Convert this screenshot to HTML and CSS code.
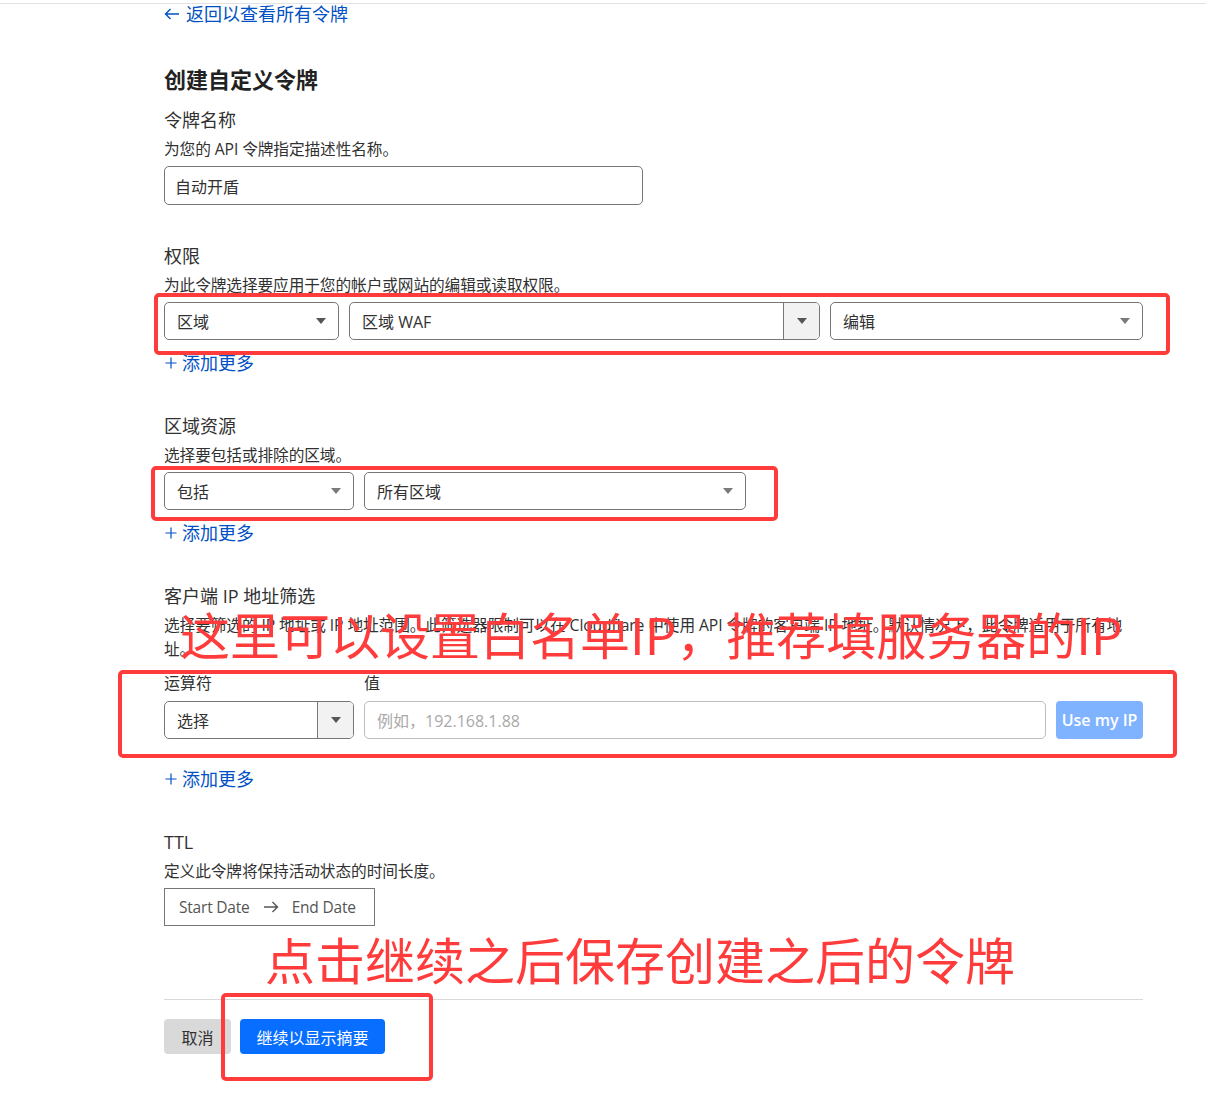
FILE: index.html
```html
<!DOCTYPE html>
<html lang="zh-CN">
<head>
<meta charset="utf-8">
<title>创建自定义令牌</title>
<link rel="stylesheet" href="styles.css">
</head>
<body>
<div class="page">
  <div class="topbar"></div>
  <main class="content">
    <a class="back" href="#">
      <svg class="back-arrow" width="16" height="12" viewBox="0 0 16 12"><path d="M15 6H1.5M6.5 1L1.5 6l5 5" fill="none" stroke="#0051c3" stroke-width="1.4"/></svg>
      <span>返回以查看所有令牌</span>
    </a>
    <h1 class="title">创建自定义令牌</h1>

    <section class="field field-first">
      <div class="label">令牌名称</div>
      <div class="desc">为您的 API 令牌指定描述性名称。</div>
      <div class="control name-input">自动开盾</div>
    </section>

    <section class="field">
      <div class="label">权限</div>
      <div class="desc">为此令牌选择要应用于您的帐户或网站的编辑或读取权限。</div>
      <div class="row perm-row">
        <div class="control select"><span>区域</span><i class="caret"></i></div>
        <div class="control select addon-select"><span class="val">区域 WAF</span><span class="addon"><i class="caret"></i></span></div>
        <div class="control select"><span>编辑</span><i class="caret caret-light"></i></div>
      </div>
      <a class="add-more" href="#"><svg class="plus" width="12" height="12" viewBox="0 0 12 12"><path d="M6 0.5v11M0.5 6h11" stroke="#0051c3" stroke-width="1.2" fill="none"/></svg>添加更多</a>
    </section>

    <section class="field">
      <div class="label">区域资源</div>
      <div class="desc">选择要包括或排除的区域。</div>
      <div class="row zone-row">
        <div class="control select"><span>包括</span><i class="caret caret-light"></i></div>
        <div class="control select"><span>所有区域</span><i class="caret caret-light"></i></div>
      </div>
      <a class="add-more" href="#"><svg class="plus" width="12" height="12" viewBox="0 0 12 12"><path d="M6 0.5v11M0.5 6h11" stroke="#0051c3" stroke-width="1.2" fill="none"/></svg>添加更多</a>
    </section>

    <section class="field">
      <div class="label">客户端 IP 地址筛选</div>
      <div class="desc desc-wrap">选择要筛选的 IP 地址或 IP 地址范围。此筛选器限制可以在 Cloudflare 中使用 API 令牌的客户端 IP 地址。默认情况下，此令牌适用于所有地址。</div>
      <div class="sub-labels">
        <span class="sub-op">运算符</span>
        <span>值</span>
      </div>
      <div class="row ip-row">
        <div class="control select addon-select"><span class="val">选择</span><span class="addon"><i class="caret"></i></span></div>
        <div class="control text-input"><span class="placeholder">例如，192.168.1.88</span></div>
        <button class="btn-ip" type="button">Use my IP</button>
      </div>
      <a class="add-more add-more-ip" href="#"><svg class="plus" width="12" height="12" viewBox="0 0 12 12"><path d="M6 0.5v11M0.5 6h11" stroke="#0051c3" stroke-width="1.2" fill="none"/></svg>添加更多</a>
    </section>

    <section class="field">
      <div class="label">TTL</div>
      <div class="desc">定义此令牌将保持活动状态的时间长度。</div>
      <div class="date-box">
        <span>Start Date</span>
        <svg class="date-arrow" width="16" height="12" viewBox="0 0 16 12"><path d="M1 6h13.5M9.5 1l5 5-5 5" fill="none" stroke="#555" stroke-width="1.4"/></svg>
        <span>End Date</span>
      </div>
    </section>

    <div class="divider"></div>
    <div class="actions">
      <button class="btn btn-cancel" type="button">取消</button>
      <button class="btn btn-primary" type="button">继续以显示摘要</button>
    </div>
  </main>

  <div class="anno-box box-perm"></div>
  <div class="anno-box box-zone"></div>
  <div class="anno-box box-ip"></div>
  <div class="anno-box box-btn"></div>
  <div class="anno-text text-ip">这里可以设置白名单IP，推荐填服务器的IP</div>
  <div class="anno-text text-btn">点击继续之后保存创建之后的令牌</div>
</div>
</body>
</html>
```

FILE: styles.css
```css
* { box-sizing: border-box; }
body {
  margin: 0;
  background: #fff;
  font-family: "Open Sans", "Noto Sans CJK SC", sans-serif;
  color: #313131;
}
.page {
  position: relative;
  width: 1206px;
  height: 1100px;
  overflow: hidden;
}
.topbar {
  height: 4px;
  border-bottom: 1px solid #e2e2e2;
}
.content {
  padding-left: 164px;
  width: 1143px;
}
.back {
  display: flex;
  align-items: center;
  gap: 6px;
  height: 20px;
  color: #0051c3;
  font-size: 18px;
  line-height: 20px;
  text-decoration: none;
}
.back-arrow { flex: none; }
.title {
  margin: 40px 0 0;
  font-size: 22px;
  line-height: 30px;
  font-weight: 700;
  color: #222;
}
.field { margin-top: 39px; }
.field-first { margin-top: 14px; }
.label {
  font-size: 18px;
  line-height: 24px;
  margin-bottom: 5px;
}
.desc {
  font-size: 15.7px;
  line-height: 24px;
  margin-bottom: 5px;
  letter-spacing: -0.1px;
}
.desc-wrap { max-width: 975px; }
.control {
  height: 38px;
  border: 1px solid #767676;
  border-radius: 5px;
  display: flex;
  align-items: center;
  padding: 0 12px;
  font-size: 16px;
  color: #313131;
  background: #fff;
}
.name-input {
  width: 479px;
  height: 39px;
  padding-left: 10px;
}
.row { display: flex; gap: 10px; }
.perm-row .select:nth-child(1) { width: 175px; }
.perm-row .select:nth-child(2) { width: 471px; }
.perm-row .select:nth-child(3) { flex: 1; }
.zone-row .select:nth-child(1) { width: 190px; }
.zone-row .select:nth-child(2) { width: 382px; }
.select { justify-content: space-between; }
.caret {
  width: 0;
  height: 0;
  border-left: 5px solid transparent;
  border-right: 5px solid transparent;
  border-top: 6px solid #555;
}
.caret-light { border-top-color: #7a7a7a; }
.addon-select { padding-right: 0; overflow: hidden; }
.addon-select .val { flex: 1; }
.addon {
  width: 36px;
  height: 100%;
  border-left: 1px solid #767676;
  background: #f2f2f2;
  display: flex;
  align-items: center;
  justify-content: center;
}
.add-more {
  display: flex;
  align-items: center;
  margin-top: 11px;
  color: #0051c3;
  font-size: 18px;
  line-height: 24px;
  height: 24px;
  text-decoration: none;
}
.add-more-ip { margin-top: 28px; }
.plus {
  flex: none;
  margin: 0 5px 0 1px;
}
.sub-labels {
  display: flex;
  margin-top: 11px;
  margin-bottom: 7px;
  font-size: 16px;
  line-height: 22px;
}
.sub-op { width: 200px; }
.ip-row .select { width: 190px; }
.text-input {
  flex: 1;
  border-color: #bdbdbd;
}
.placeholder { color: #a9a9a9; }
.btn-ip {
  width: 87px;
  height: 38px;
  border: 0;
  border-radius: 4px;
  background: #80b3ff;
  color: #fff;
  font-family: "Open Sans", "Noto Sans CJK SC", sans-serif;
  font-size: 16px;
  font-weight: 600;
  padding: 0;
  white-space: nowrap;
}
.date-box {
  width: 211px;
  height: 38px;
  border: 1px solid #767676;
  display: flex;
  align-items: center;
  gap: 13px;
  padding: 0 14px;
  font-size: 15.5px;
  color: #555;
  white-space: nowrap;
  letter-spacing: -0.2px;
}
.date-arrow { flex: none; }
.divider {
  margin-top: 73px;
  border-top: 1px solid #d9d9d9;
}
.actions {
  display: flex;
  gap: 9px;
  margin-top: 19px;
}
.btn {
  height: 35px;
  border: 0;
  border-radius: 4px;
  font-family: "Open Sans", "Noto Sans CJK SC", sans-serif;
  font-size: 16px;
  padding: 0;
}
.btn-cancel {
  width: 67px;
  background: #d9d9d9;
  color: #313131;
}
.btn-primary {
  width: 145px;
  background: #086eff;
  color: #fff;
}

/* annotation overlays */
.anno-box {
  position: absolute;
  border: 4px solid #ff3b3b;
  border-radius: 5px;
}
.box-perm { left: 154px; top: 293px; width: 1016px; height: 62px; }
.box-zone { left: 151px; top: 466px; width: 627px; height: 55px; }
.box-ip { left: 118px; top: 670px; width: 1059px; height: 88px; }
.box-btn { left: 221px; top: 993px; width: 212px; height: 88px; }
.anno-text {
  position: absolute;
  color: #ff3b3b;
  font-family: "Noto Sans CJK SC", sans-serif;
  font-size: 50px;
  line-height: 50px;
  white-space: nowrap;
}
.text-ip { left: 180px; top: 608px; }
.text-btn { left: 265px; top: 933px; }
```
